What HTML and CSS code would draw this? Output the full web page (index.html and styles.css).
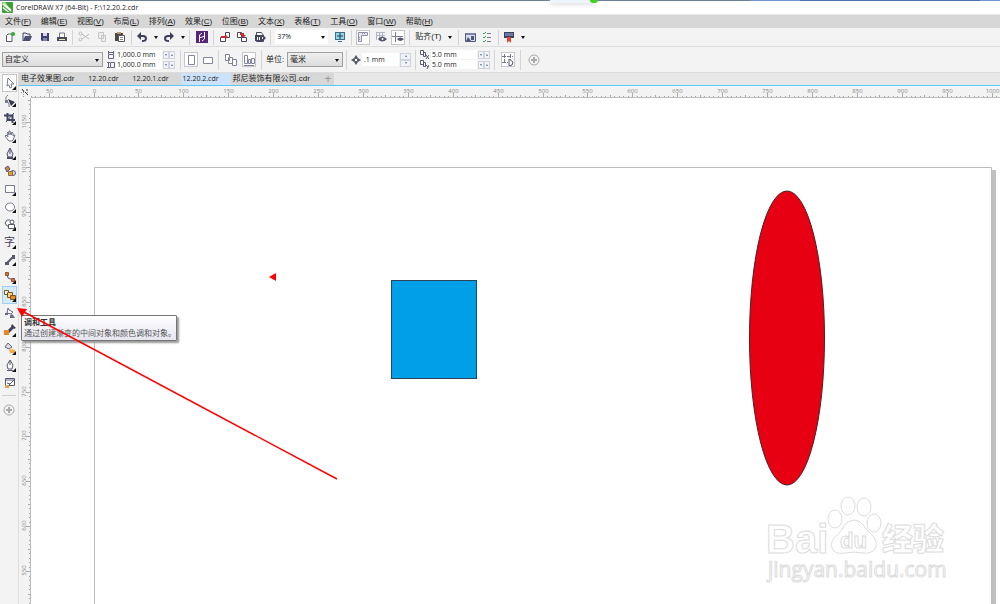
FILE: index.html
```html
<!DOCTYPE html>
<html lang="zh-CN">
<head>
<meta charset="utf-8">
<title>CorelDRAW X7 (64-Bit) - F:\12.20.2.cdr</title>
<link rel="stylesheet" href="styles.css">
</head>
<body>
<div class="desktop-strip"><span class="strip-card"></span><span class="strip-dot"></span><span class="strip-blue"></span></div>
<header class="title-bar">
  <svg class="logo" viewBox="0 0 12 12"><rect width="12" height="12" rx="1" fill="#3f9f3b"/><path d="M0 0h4l5 9-4-2L0 3z" fill="#8fd06c"/><path d="M2 1l8 7v3L1 3zM1 5l7 6H6L1 7z" fill="#fff"/></svg>
  <span>CorelDRAW X7 (64-Bit) - F:\12.20.2.cdr</span>
</header>
<nav class="menu-bar">
  <div class="menus"><button>文件(<u>F</u>)</button><button>编辑(<u>E</u>)</button><button>视图(<u>V</u>)</button><button>布局(<u>L</u>)</button><button>排列(<u>A</u>)</button><button>效果(<u>C</u>)</button><button>位图(<u>B</u>)</button><button>文本(<u>X</u>)</button><button>表格(<u>T</u>)</button><button>工具(<u>O</u>)</button><button>窗口(<u>W</u>)</button><button>帮助(<u>H</u>)</button></div>
</nav>

<div class="bar standard">
  <div class="group w73">
    <button class="ib" aria-label="新建"><svg viewBox="0 0 12 12"><path d="M2.500 4.500L4 3h4v7.500H2.500z" fill="#fff" stroke="#55586c"/><circle cx="9" cy="3" r="2" fill="#2fae2f"/></svg></button>
    <button class="ib" aria-label="打开"><svg viewBox="0 0 12 12"><path d="M2 10V2h3l1 1h3v2" fill="#e8e8ee" stroke="#3e4160"/><path d="M2 10l2-5h7L9 10z" fill="#4b4e70"/></svg></button>
    <button class="ib" aria-label="保存"><svg viewBox="0 0 12 12"><path d="M2 2h8v8H3L2 9z" fill="#3f4270"/><path d="M4 2h4v3H4z" fill="#d7d9ea"/><path d="M4 7h4v3H4z" fill="#8084ab"/></svg></button>
    <button class="ib" aria-label="打印"><svg viewBox="0 0 12 12"><path d="M3.500 6V2h5v4" fill="#fff" stroke="#777"/><path d="M1 6h10v4H1z" fill="#474a5c"/><path d="M3 8h6v1H3z" fill="#e7efae"/></svg></button>
  </div>
  <div class="group w59">
    <button class="ib" aria-label="剪切" disabled><svg viewBox="0 0 12 12" fill="none" stroke="#bbb"><path d="M4 3l7 5M4 8l7-5"/><circle cx="2.500" cy="2.500" r="1.500"/><circle cx="2.500" cy="8.500" r="1.500"/></svg></button>
    <button class="ib" aria-label="复制" disabled><svg viewBox="0 0 12 12" fill="#eee" stroke="#c4c4c4"><path d="M2.500 1.500h5v6h-5zM5.500 4.500h4v6h-4z"/></svg></button>
    <button class="ib" aria-label="粘贴"><svg viewBox="0 0 12 12"><path d="M1 2h8v8H1z" fill="#4c4744"/><path d="M3 1h4v2H3z" fill="#b89a6a"/><path d="M4.500 4.500h6v6h-6z" fill="#fff" stroke="#555"/><path d="M6 6.500h3M6 8.500h3" stroke="#888"/></svg></button>
  </div>
  <div class="group w58">
    <button class="ib" aria-label="撤销"><svg viewBox="0 0 12 12"><path d="M4 5h3q3 0 3 2.500T6 10" fill="none" stroke="#3d405c" stroke-width="2"/><path d="M1 5l4-4v8z" fill="#3d405c"/></svg></button>
    <button class="drop" aria-label="撤销列表"></button>
    <button class="ib" aria-label="重做"><svg viewBox="0 0 12 12"><path d="M8 5H5Q2 5 2 7.500T6 10" fill="none" stroke="#3d405c" stroke-width="2"/><path d="M11 5L7 1v8z" fill="#3d405c"/></svg></button>
    <button class="drop" aria-label="重做列表"></button>
  </div>
  <div class="group w24">
    <button class="ib" aria-label="搜索内容"><svg viewBox="0 0 12 12"><path d="M0 0h12v12H0z" fill="#57247c"/><path d="M3.500 11V4L6 2M8.500 1v7L6 10M3 7l6-2" fill="none" stroke="#fff"/></svg></button>
  </div>
  <div class="group w57">
    <button class="ib" aria-label="导入"><svg viewBox="0 0 12 12"><path d="M1.500 6.500h5v4h-5zM6.500 1.500h4v5h-4z" fill="#fff" stroke="#44465f"/><path d="M2 5h4V3l3 3-3 2V7H2z" fill="#c92c2c"/></svg></button>
    <button class="ib" aria-label="导出"><svg viewBox="0 0 12 12"><path d="M1.500 1.500h4v5h-4zM5.500 6.500h5v4h-5z" fill="#fff" stroke="#44465f"/><path d="M4 2h4v2h2L7 7 5 4H4z" fill="#c92c2c"/></svg></button>
    <button class="ib" aria-label="发布为 PDF"><svg viewBox="0 0 12 12"><path d="M2.500 1.500h5l2 3v6h-7z" fill="#fff" stroke="#44465f"/><path d="M1 4h8l3 3-3 3H1z" fill="#44465f"/><path d="M3.500 6v3M5.500 6v3M8.500 6v2" stroke="#fff"/></svg></button>
  </div>
  <div class="group w81">
    <label class="pick zoom"><select aria-label="缩放级别"><option>37%</option></select></label>
    <button class="ib" aria-label="全屏预览"><svg viewBox="0 0 12 12"><path d="M1 1h10v8H1zM4 10h4v1H4z" fill="#426b86"/><path d="M2 2h8v6H2z" fill="#8ddbe6"/><path d="M3 5h6M6 2v6" stroke="#27384a"/></svg></button>
  </div>
  <div class="group w58">
    <button class="ib boxed" aria-label="显示标尺"><svg viewBox="0 0 12 12"><path d="M1.500 10.500v-9h9v3h-6v6z" fill="#e7e7f0" stroke="#8b8ea8"/><path d="M5.500 2v1M7.500 2v1M2 6.500h1M2 8.500h1" stroke="#8b8ea8"/></svg></button>
    <button class="ib" aria-label="显示网格"><svg viewBox="0 0 12 12"><path d="M1.500 1v8M4.500 1v8M7.500 1v8M1 1.500h9M1 4.500h9" stroke="#b4b6c8"/><path d="M3 8q4-5 9 0-5 5-9 0z" fill="#55586d"/><circle cx="7.500" cy="8" r="1" fill="#fff"/></svg></button>
    <button class="ib boxed" aria-label="显示辅助线"><svg viewBox="0 0 12 12"><path d="M3.500 1v10M0 5.500h11" stroke="#77798d"/><path d="M5 8q3-3 7 0-4 4-7 0z" fill="#55586d"/></svg></button>
  </div>
  <div class="group w49"><button class="text-button">贴齐(T)</button><button class="drop" aria-label="贴齐选项"></button></div>
  <div class="group w40">
    <button class="ib" aria-label="欢迎屏幕"><svg viewBox="0 0 12 12"><path d="M1.500 2.500h10v8h-10z" fill="#d9def0" stroke="#50557a"/><path d="M2 2h9v2H2z" fill="#7a80a8"/><path d="M2 10l2-4 3 4zM7 5h3v4H7z" fill="#50557a"/></svg></button>
    <button class="ib" aria-label="选项"><svg viewBox="0 0 12 12"><path d="M6 2.500h4M6 6.500h4M6 10.500h4" stroke="#77798d"/><path d="M2 2l1 1 2-2M2 6l1 1 2-2M2 10l1 1 2-2" fill="none" stroke="#3da34d"/></svg></button>
  </div>
  <div class="group last w30">
    <button class="ib" aria-label="应用程序启动器"><svg viewBox="0 0 12 12"><path d="M1 1h10v6H1z" fill="#3b4160"/><path d="M2 2h8v3H2z" fill="#6f78a5"/><path d="M4 6h4v6L6 10l-2 2z" fill="#e1472c"/></svg></button>
    <button class="drop" aria-label="启动器列表"></button>
  </div>
</div>

<div class="bar property">
  <div class="group size w181">
    <label class="pick preset"><select aria-label="页面大小"><option>自定义</option></select></label>
    <div class="stack">
      <div class="field"><svg viewBox="0 0 8 8" fill="none" stroke="#66687e"><path d="M1.500 3.500h5v4h-5zM1 1.500h6M1.500 0v3M6.500 0v3"/></svg><input aria-label="页面宽度" value="1,000.0 mm"><span class="spin"><button aria-label="减小宽度"></button><button class="up" aria-label="增大宽度"></button></span></div>
      <div class="field"><svg viewBox="0 0 8 8" fill="none" stroke="#66687e"><path d="M3.500 1.500h4v5h-4zM1.500 1v6M0 1.500h3M0 6.500h3"/></svg><input aria-label="页面高度" value="1,000.0 mm"><span class="spin"><button aria-label="减小高度"></button><button class="up" aria-label="增大高度"></button></span></div>
    </div>
  </div>
  <div class="group w38">
    <button class="ib boxed" aria-label="纵向"><svg viewBox="0 0 12 12"><path d="M3.500 1.500h6v9h-6z" fill="#fff" stroke="#8083a0"/></svg></button>
    <button class="ib" aria-label="横向"><svg viewBox="0 0 12 12"><path d="M1.500 3.500h9v6h-9z" fill="#fff" stroke="#8083a0"/></svg></button>
  </div>
  <div class="group w43">
    <button class="ib" aria-label="所有页面"><svg viewBox="0 0 12 12" fill="#fff" stroke="#8083a0"><path d="M.5.500h4v6h-4zM3.500 3.500h4v6h-4zM7.500 5.500h4v6h-4z"/></svg></button>
    <button class="ib boxed" aria-label="当前页"><svg viewBox="0 0 12 12" fill="#fff" stroke="#8083a0"><path d="M1.500 1.500h3v8h-3zM5.500 5.500h2v4h-2zM8.500 4.500h3v5h-3zM1 11.500h10"/></svg></button>
  </div>
  <div class="group w83">
    <label class="unit-label" for="unit">单位:</label>
    <span class="pick unit"><select id="unit"><option>毫米</option></select></span>
  </div>
  <div class="group w69">
    <div class="nudge"><svg viewBox="0 0 10 10"><path d="M5 0l2 3H3zM5 10l2-3H3zM0 5l3-2v4zM10 5L7 3v4z" fill="#55586f"/><path d="M3.500 3.500h3v3h-3z" fill="#fff" stroke="#55586f"/></svg><input aria-label="微调距离" value=".1 mm"><span class="spin tall"><button class="up" aria-label="增大微调"></button><button aria-label="减小微调"></button></span></div>
  </div>
  <div class="group w79">
    <div class="stack">
      <div class="field dup"><svg viewBox="0 0 9 9" fill="#fff" stroke="#55586f"><path d="M.5.500h3v4h-3zM3.500 2.500h2v4h-2z"/><path d="M6 5l3 4M9 5L6 9"/></svg><input aria-label="再制距离 X" value="5.0 mm"><span class="spin"><button aria-label="减小 X"></button><button class="up" aria-label="增大 X"></button></span></div>
      <div class="field dup"><svg viewBox="0 0 9 9" fill="#fff" stroke="#55586f"><path d="M.5.500h3v4h-3zM3.500 2.500h2v4h-2z"/><path d="M6 5l2 2M9 5L7 9"/></svg><input aria-label="再制距离 Y" value="5.0 mm"><span class="spin"><button aria-label="减小 Y"></button><button class="up" aria-label="增大 Y"></button></span></div>
    </div>
  </div>
  <div class="group w25">
    <button class="ib boxed" aria-label="视为已填充"><svg viewBox="0 0 12 12"><path d="M2.500 0v10M8.500 0v6M0 2.500h11M0 8.500h6" fill="none" stroke="#74778f" stroke-dasharray="4 1"/><path d="M7 5l4 3-1 3-3 1z" fill="#fff" stroke="#55586f"/></svg></button>
  </div>
  <div class="group last w25">
    <button class="ib" aria-label="自定义"><svg viewBox="0 0 12 12" fill="none" stroke="#aaa"><circle cx="6" cy="6" r="5"/><path d="M6 3v6M3 6h6" stroke-width="2"/></svg></button>
  </div>
</div>

<main class="workspace">
  <aside class="toolbox">
    <div class="tools">
      <button class="tool more picked" aria-label="选择工具"><svg viewBox="0 0 12 12"><path d="M4 1l6 6H7l1 3-2 1-1-3-2 1z" fill="#fff" stroke="#777a91"/></svg></button>
      <button class="tool more" aria-label="形状工具"><svg viewBox="0 0 12 12"><path d="M4 0Q0 3 3 6t2 6" fill="none" stroke="#77798f"/><path d="M4 4l7 3-4 4z" fill="#373a52"/><path d="M1 5h3v3H1z" fill="#77798f"/></svg></button>
      <button class="tool more" aria-label="裁剪工具"><svg viewBox="0 0 12 12" fill="none" stroke="#414461"><path d="M3.500 1v7H11M0 3.500h8.500V11" stroke-width="2"/><path d="M2 10l8-9"/></svg></button>
      <button class="tool more" aria-label="平移工具"><svg viewBox="0 0 12 12"><path d="M4 10L1 6l1-1 2 2-1-4 1-1 1 3V1h1l1 4 1-3 1 1v3l2-1-2 5-1 1H5z" fill="#fff" stroke="#6c6f87"/></svg></button>
      <button class="tool more" aria-label="钢笔工具"><svg viewBox="0 0 12 12"><path d="M6 0l3 6-1 3H4L3 6z" fill="#e9e9f2" stroke="#4b4e68"/><path d="M6 1v5" stroke="#4b4e68"/><path d="M3 9h6v2H3z" fill="#4b4e68"/></svg></button>
      <button class="tool" aria-label="智能填充"><svg viewBox="0 0 12 12"><path d="M1 3l3-2 2 3-3 3z" fill="#c78545" stroke="#5a5d76"/><circle cx="9" cy="8" r="2.500" fill="#d8ddea" stroke="#5a5d76"/><path d="M4.500 6.500h4v4h-4z" fill="#f19b35" stroke="#8a6a4c"/></svg></button>
      <button class="tool more" aria-label="矩形工具"><svg viewBox="0 0 12 12"><path d="M1.500 2.500h9v7h-9z" fill="#fff" stroke="#777a91"/></svg></button>
      <button class="tool more" aria-label="椭圆形工具"><svg viewBox="0 0 12 12"><ellipse cx="6" cy="6" rx="4.500" ry="4" fill="#fff" stroke="#777a91"/></svg></button>
      <button class="tool more" aria-label="多边形工具"><svg viewBox="0 0 12 12" fill="#fff" stroke="#55586f"><path d="M1 5l2-3h3l2 3-2 3H3z"/><circle cx="8" cy="4" r="2"/><path d="M4.500 6.500h6v4h-6z"/></svg></button>
      <button class="tool more glyph" aria-label="文本工具">字</button>
      <button class="tool more" aria-label="平行度量"><svg viewBox="0 0 12 12"><path d="M2 10l8-8" stroke="#555870" stroke-width="2"/><path d="M1 8h4v3H1zM8 1h3v4H8z" fill="#555870"/></svg></button>
      <button class="tool more" aria-label="直线连接器"><svg viewBox="0 0 12 12"><path d="M3 3l1 4 5 2" fill="none" stroke="#555870"/><path d="M1.500 1.500h3v3h-3zM7.500 7.500h3v3h-3z" fill="#d27434" stroke="#915330"/></svg></button>
      <button class="tool more active" aria-label="调和工具"><svg viewBox="0 0 12 12" stroke="#77561b"><path d="M.5 1.500h4v4h-4z" fill="#fff"/><path d="M3.500 3.500h5v5h-5z" fill="#ffd17c"/><path d="M6.500 6.500h5v4h-5z" fill="#f18a1e"/></svg></button>
      <button class="tool" aria-label="透明度工具"><svg viewBox="0 0 12 12"><path d="M4 1l1 2 4 2-2 2-4-1z" fill="#fff" stroke="#686b82"/><path d="M6 9q1-3 3-1l2 3H6zM1 6h3v2H1z" fill="#686b82"/></svg></button>
      <button class="tool more" aria-label="颜色滴管"><svg viewBox="0 0 12 12"><path d="M3 9l6-6" stroke="#3f425d" stroke-width="3"/><path d="M8 0l4 4-2 1-3-3z" fill="#3f425d"/><path d="M0 6h5v5H0z" fill="#ed8420"/></svg></button>
      <button class="tool more" aria-label="交互式填充"><svg viewBox="0 0 12 12"><path d="M4 1l4 4-3 2-4-2z" fill="#ddd" stroke="#606379"/><path d="M5 8l3-1 3 1v3H6z" fill="#f5ac3d"/></svg></button>
      <button class="tool more" aria-label="轮廓笔"><svg viewBox="0 0 12 12"><path d="M6 0l3 5-1 4H4L3 5z" fill="#fff" stroke="#555870"/><path d="M6 1v4M3 10.500h6" stroke="#555870"/></svg></button>
      <button class="tool" aria-label="智能绘图"><svg viewBox="0 0 12 12"><path d="M1.500 1.500h9v7h-9z" fill="#fff" stroke="#555870"/><path d="M2 3h8L5 8M3 6l3 1" fill="none" stroke="#555870"/><path d="M1 8h4v3H1z" fill="#e9a14b"/></svg></button>
    </div>
    <button class="add-tool" aria-label="快速自定义"><svg viewBox="0 0 12 12" fill="none" stroke="#aaa"><circle cx="6" cy="6" r="5"/><path d="M6 3v6M3 6h6" stroke-width="2"/></svg></button>
  </aside>

  <section class="document">
    <div class="tabs">
      <button class="tab">电子效果图.cdr</button><button class="tab latin">12.20.cdr</button><button class="tab latin">12.20.1.cdr</button><button class="tab latin current">12.20.2.cdr</button><button class="tab">邦尼装饰有限公司.cdr</button><button class="tab-add" aria-label="新建文档">+</button>
    </div>
    <div class="sheet">
      <div class="corner"><svg viewBox="0 0 12 12"><path d="M4.500 4v7M2 6.500h7" stroke="#999" stroke-dasharray="1 1"/><path d="M3 3l2 3M6 6l3 3M7 4h2" stroke="#333"/></svg></div>
      <svg class="ruler-h" id="ruler-h"></svg>
      <svg class="ruler-v" id="ruler-v"></svg>
      <svg class="canvas">
        <rect x="961" y="72" width="4" height="600" fill="#c0c0c0"/>
        <path d="M63.500 600V69.500h897V600" fill="#fff" stroke="#bcbcbc"/>
        <rect x="360.500" y="182.500" width="85" height="98" fill="#00a0e9" stroke="#27465a"/>
        <ellipse cx="756" cy="240" rx="37.500" ry="147" fill="#e60012" stroke="#4b2023"/>
        <path d="M238 179l7-4v8z" fill="#f00"/>
        <g class="watermark">
          <text class="wm-bai" x="735" y="455">Bai</text>
          <ellipse cx="804" cy="421" rx="7" ry="9"/><ellipse cx="817" cy="408" rx="7" ry="9"/><ellipse cx="833" cy="409" rx="7" ry="9"/><ellipse cx="843" cy="425" rx="7" ry="9"/>
          <path d="M823 422Q829 422 833 428Q837 434 843 439Q847 446 844 451Q840 456 832 455Q823 453 814 455Q804 457 801 450Q799 443 805 438Q810 434 813 428Q817 422 823 422z"/>
          <text class="wm-du" x="809" y="450">du</text>
          <text class="wm-cn" x="851" y="452">经验</text>
          <text class="wm-url" x="737" y="479">jingyan.baidu.com</text>
        </g>
      </svg>
    </div>
  </section>
  <div class="tooltip" role="tooltip"><strong>调和工具</strong><span>通过创建渐变的中间对象和颜色调和对象。</span></div>
  <svg class="arrow"><path d="M22 238L337 406" stroke="#f00" stroke-width="1.500"/><path d="M17 235l10 1-5 8z" fill="#f00"/></svg>
</main>
<script src="rulers.js"></script>
</body>
</html>
```
FILE: styles.css
```css
* { box-sizing: border-box; }
body {
  margin: 0; height: 100vh; overflow: hidden; display: flex; flex-direction: column;
  background: #fff; color: #222;
  font: 8px/12px "Liberation Sans", "Noto Sans CJK SC", sans-serif;
}
button, input, select { font: inherit; color: inherit; margin: 0; padding: 0; border: 0; background: none; border-radius: 0; }
button { display: flex; align-items: center; justify-content: center; white-space: nowrap; }
svg { display: block; flex: none; }

.desktop-strip { height: 1px; flex: none; background: linear-gradient(90deg, #6e7f93 75%, #6c96cc 75%); position: relative; }
.strip-card, .strip-dot, .strip-blue { position: absolute; top: 0; }
.strip-card { left: 55%; width: 45px; height: 3px; background: #eef6fd; box-shadow: 0 1px 5px #ccc; }
.strip-dot { left: 59%; width: 8px; height: 3px; background: #43cf26; border-radius: 0 0 4px 4px; }
.strip-blue { left: 80%; width: 18%; height: 1px; background: #4e73a6; }

.title-bar { height: 13px; flex: none; display: flex; align-items: center; gap: 3px; padding-left: 2px; font: 7px/12px "Open Sans", sans-serif; }
.logo { width: 11px; height: 11px; }
.menu-bar { height: 14px; flex: none; display: flex; align-items: center; padding-left: 5px; background: #d7d7d7; border-top: 1px solid #e8e8e8; }
.menus { display: flex; justify-content: space-between; width: 428px; }

.bar { flex: none; display: flex; align-items: center; background: #f3f3f3; border-bottom: 1px solid #dcdcdc; }
.standard { height: 19px; }
.property { height: 26px; }
.group { display: flex; align-items: center; justify-content: space-evenly; flex: none; height: 15px; border-right: 1px solid #d5d5d5; }
.property .group { height: 20px; }
.property .size { justify-content: flex-start; gap: 4px; padding-left: 2px; }
.group.last { border: 0; }
.w24 { width: 24px; } .w25 { width: 26px; } .w30 { width: 30px; } .w38 { width: 38px; } .w40 { width: 40px; }
.w43 { width: 43px; } .w49 { width: 49px; } .w57 { width: 57px; } .w58 { width: 58px; } .w59 { width: 59px; }
.w69 { width: 69px; } .w73 { width: 73px; } .w79 { width: 79px; } .w81 { width: 81px; } .w83 { width: 85px; } .w181 { width: 181px; }
.ib { width: 14px; height: 15px; }
.ib svg { width: 12px; height: 12px; }
.boxed { background: #fff; border: 1px solid #c6c6c6; }
.drop { width: 6px; height: 12px; }
.drop::after, .pick::after { content: ""; border: 2px solid transparent; border-top: 3px solid #111; border-bottom: 0; }

.pick { position: relative; display: flex; }
.pick::after { position: absolute; right: 3px; top: calc(50% - 1px); }
.pick select { appearance: none; width: 100%; padding-left: 2px; }
.zoom { width: 53px; height: 14px; background: #fff; font: 7px/12px "Open Sans", sans-serif; }
.preset, .unit { height: 15px; border: 1px solid #a0a0a0; background: linear-gradient(#efefef, #dcdcdc); }
.preset { width: 101px; }
.unit { width: 56px; }
.unit-label { margin-left: 1px; }

.stack { display: flex; flex-direction: column; }
.field, .nudge { display: flex; align-items: center; font: 7px/10px "Open Sans", sans-serif; }
.field { height: 10px; }
.field svg { width: 8px; height: 8px; margin-right: 1px; }
.field input { width: 46px; height: 9px; background: #fff; padding-left: 1px; }
.field.dup svg { width: 9px; height: 9px; margin-right: 2px; }
.spin { display: flex; margin-left: 1px; }
.spin button { width: 6px; height: 8px; border: 1px solid #cfd2da; background: #f1f3f8; }
.spin button::after { content: ""; border: 1px solid transparent; border-top: 2px solid #5e6fa3; border-bottom: 0; }
.spin button.up::after { border-top: 0; border-bottom: 2px solid #5e6fa3; }
.nudge svg { width: 10px; height: 10px; margin-right: 1px; }
.nudge input { width: 37px; height: 13px; background: #fff; padding-left: 2px; }
.tall { flex-direction: column; }
.tall button { width: 11px; height: 7px; }

.workspace { position: relative; flex: 1; min-height: 0; display: flex; }
.toolbox { width: 19px; flex: none; display: flex; flex-direction: column; background: #f3f3f3; border-right: 1px solid #ddd; }
.tools { height: 323px; margin: 0 2px; padding: 1px 0 3px; display: flex; flex-direction: column; border-bottom: 1px solid #d0d0d0; }
.tool { position: relative; flex: 1; width: 15px; border: 1px solid transparent; }
.tool svg { width: 12px; height: 12px; }
.more::after { content: ""; position: absolute; right: 0; bottom: 1px; border-left: 4px solid transparent; border-bottom: 4px solid #111; }
.picked { background: #fff; border-color: #c4c4c4; }
.active { background: #d6eafc; border-color: #9fcdf3; }
.glyph { font-size: 11px; color: #44475d; }
.add-tool { height: 28px; }
.add-tool svg { width: 12px; height: 12px; }

.document { flex: 1; min-width: 0; display: flex; flex-direction: column; }
.tabs { display: flex; flex: none; height: 13px; background: #e8e8e8; border-bottom: 1px solid #5fc8f5; }
.tab { padding: 0 12px 0 2px; background: #d7d7d7; }
.latin { font: 7px/12px "Open Sans", sans-serif; }
.current { background: #cce2fc; }
.tab-add { width: 12px; background: #d7d7d7; color: #999; font-size: 12px; }
.sheet { flex: 1; min-height: 0; display: grid; grid-template: 12px 1fr / 12px 1fr; }
.corner { background: #f3f3f3; }
.corner svg { width: 12px; height: 12px; }
.ruler-h, .ruler-v { width: 100%; height: 100%; background: #f3f3f3; font: 6px "Open Sans", sans-serif; fill: #888; stroke: none; overflow: hidden; }
.ruler-h { border-bottom: 1px solid #bbb; }
.ruler-v { border-right: 1px solid #bbb; }
.ruler-h text, .ruler-v text { text-anchor: middle; }
.ruler-h line, .ruler-v line { stroke: #aaa; }
.canvas { width: 100%; height: 100%; background: #fff; overflow: hidden; }

.watermark { fill: #fff; stroke: #dcdcdc; stroke-width: 1px; }
.wm-bai { font: bold 40px "Liberation Sans", sans-serif; }
.wm-du { font: bold 22px "Liberation Sans", sans-serif; }
.wm-cn { font: 900 31px "Noto Sans CJK SC", sans-serif; }
.wm-url { font: 21px "Open Sans", sans-serif; }

.tooltip {
  position: absolute; left: 21px; top: 242px; height: 26px; padding: 1px 0 0 2px;
  display: flex; flex-direction: column; color: #555; font-size: 8px; line-height: 11px; white-space: nowrap;
  background: linear-gradient(#fff, #e5e5f0); border: 1px solid #777; border-radius: 1px; box-shadow: 2px 2px 2px #999;
}
.tooltip strong { color: #333; }
.arrow { position: absolute; inset: 0; width: 100%; height: 100%; pointer-events: none; }
```
FILE: rulers.js
```js
const NS = 'http://www.w3.org/2000/svg';
const STEP = 44.9;

function add(parent, name, attrs, text) {
  const el = document.createElementNS(NS, name);
  for (const key in attrs) el.setAttribute(key, attrs[key]);
  if (text !== undefined) el.textContent = text;
  parent.appendChild(el);
}

const across = document.getElementById('ruler-h');
for (let i = -14; i <= 201; i++) {
  const x = Math.round(62.5 + i * STEP / 10) + 0.5;
  const major = i % 10 === 0;
  const minor = i % 5 === 0;
  add(across, 'line', { x1: x, x2: x, y1: major ? 7 : minor ? 9 : 10, y2: 11 });
  if (major) add(across, 'text', { x: x, y: 7 }, Math.abs(i * 5));
}

const down = document.getElementById('ruler-v');
for (let i = -15; i <= 98; i++) {
  const y = Math.round(69 + i * STEP / 10) + 0.5;
  const major = i % 10 === 0;
  const minor = i % 5 === 0;
  add(down, 'line', { y1: y, y2: y, x1: major ? 7 : minor ? 9 : 10, x2: 11 });
  if (major) add(down, 'text', { transform: `translate(7 ${y - 1}) rotate(-90)` }, 1000 - i * 5);
}
```
